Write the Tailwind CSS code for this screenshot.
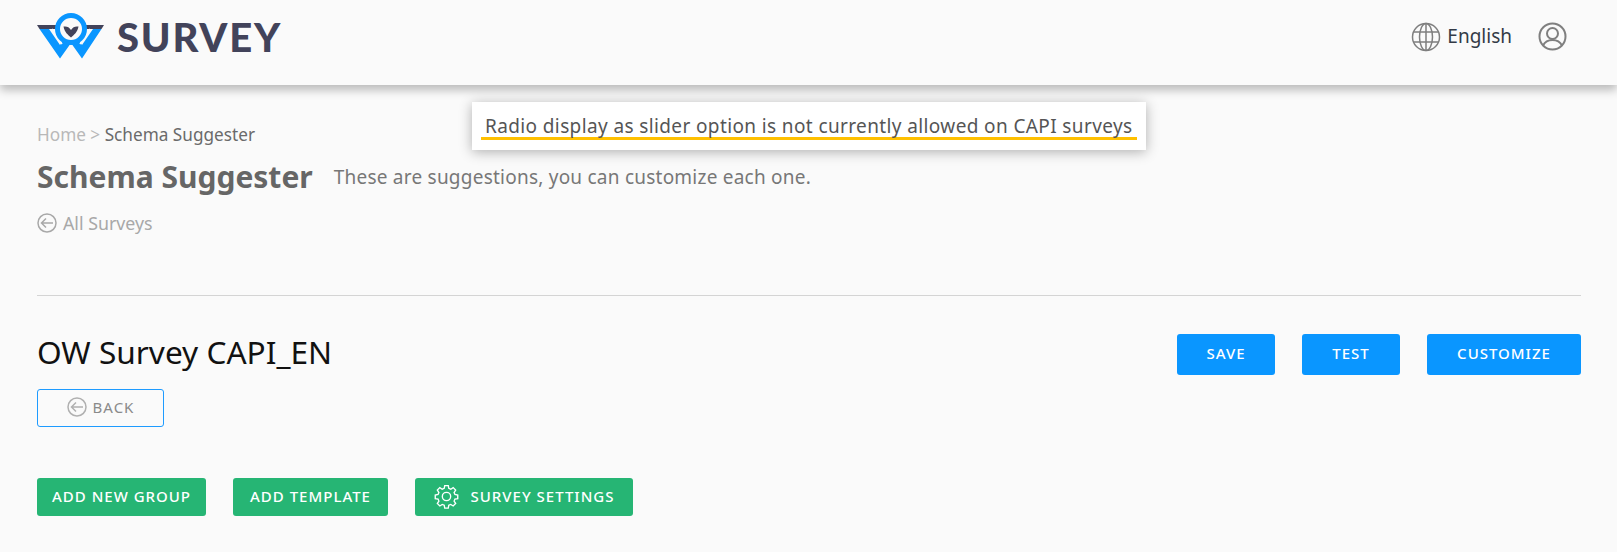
<!DOCTYPE html>
<html lang="en">
<head>
    <meta charset="UTF-8">
    <title>Survey - Schema Suggester</title>
    <script src="https://cdn.jsdelivr.net/npm/@tailwindcss/browser@4"></script>
</head>
<body class="relative h-[552px] overflow-hidden bg-[#fafafa] font-['Noto_Sans',sans-serif]">
<!-- Header -->
<header class="flex h-[85px] items-center justify-between pb-[12px] pl-[37px] pr-[50px] bg-[#fafafa] shadow-[0_5px_9px_rgba(0,0,0,0.26)]">
    <div class="flex items-center gap-[12px]">
        <svg class="w-[68px] h-[48px]" viewBox="0 0 68 48">
            <path d="M0 12H21L22 16H2.500ZM67 12H47L46 16H64.500Z" fill="#42435a"/>
            <path d="M2.500 16L23 45.500L34 30L45 45.500L64.500 16H56L45 32L37 21H31L23 32L12 16Z" fill="#0a96ff"/>
            <path d="M15 16L25 31M53 16L43 31" stroke="#fafafa" stroke-width="1.500"/>
            <circle cx="34" cy="16" r="13.500" fill="#fafafa" stroke="#0a96ff" stroke-width="5"/>
            <path d="M26.500 13.500C30 13 32 14 34 17C36 14 38 13 41.500 13.500C40.500 19 37 22 34 24.500C31 22 27.500 19 26.500 13.500Z" fill="#42435a"/>
        </svg>
        <span class="font-['Lato',sans-serif] font-black text-[40px] leading-none tracking-[1.8px] text-[#42435a]">SURVEY</span>
    </div>
    <div class="flex items-center">
        <svg class="w-[30px] h-[30px] text-[#7f7f7f]" viewBox="0 0 30 30" fill="none" stroke="currentColor" stroke-width="1.500">
            <circle cx="15" cy="15" r="13.500"/>
            <ellipse cx="15" cy="15" rx="6.500" ry="13.500"/>
            <path d="M15 1.500V28.500M2.500 10H27.500M2.500 20H27.500"/>
        </svg>
        <span class="ml-[6px] text-[19px] text-[#333a46]">English</span>
        <svg class="ml-[26px] w-[29px] h-[29px] text-[#7f7f7f]" viewBox="0 0 29 29" fill="none" stroke="currentColor" stroke-width="2">
            <circle cx="14.500" cy="14.500" r="13"/>
            <circle cx="14.500" cy="11.500" r="5.500"/>
            <path d="M5 23.500C7 19.500 10 18 14.500 18C19 18 22 19.500 24 23.500"/>
        </svg>
    </div>
</header>

<!-- Alert over the header -->
<div class="absolute left-[472px] top-[102px] w-[674px] h-[48px] bg-white shadow-[0_2px_12px_rgba(0,0,0,0.3)]">
    <div class="mx-[9px] mt-[7px] h-[31px] border-b-[3px] border-[#ffc000] px-[4px] text-[19px] leading-[34px] tracking-[0.38px] whitespace-nowrap text-[#555555]">Radio display as slider option is not currently allowed on CAPI surveys</div>
</div>

<main class="pl-[37px] pr-[36px]">
    <!-- Breadcrumb + title -->
    <div class="pt-[38px] text-[17.200px] leading-[24px] text-[#b8b8b8]">Home &gt; <span class="text-[#6a6a6a]">Schema Suggester</span></div>
    <div class="mt-[12px] flex items-center h-[36px]">
        <h1 class="text-[30px] leading-[36px] font-bold text-[#666666]">Schema Suggester</h1>
        <span class="ml-[21px] text-[19px] tracking-[0.23px] text-[#777777]">These are suggestions, you can customize each one.</span>
    </div>
    <div class="mt-[16px] flex items-center gap-[6px] text-[17.800px] leading-[24px] text-[#a8a8a8]">
        <svg class="w-[20px] h-[20px]" viewBox="0 0 20 20" fill="none" stroke="currentColor" stroke-width="1.500">
            <circle cx="10" cy="10" r="9"/>
            <path d="M16 10H4.500M9 5.500L4.500 10L9 14.500"/>
        </svg>
        All Surveys
    </div>
    <hr class="mt-[60px] border-t border-[#d4d4d4]">

    <!-- Survey name + actions -->
    <div class="mt-[35px] flex items-start justify-between">
        <div>
            <h2 class="text-[31.600px] leading-[41px] text-[#111111]">OW Survey CAPI_EN</h2>
            <button class="mt-[17px] flex items-center justify-center gap-[6px] w-[127px] h-[38px] rounded-[3px] border border-[#1e9bff] pb-[2px] text-[15px] tracking-[1px] text-[#8a8a8a]">
                <svg class="w-[20px] h-[20px]" viewBox="0 0 20 20" fill="none" stroke="#b0b0b0" stroke-width="1.500">
                    <circle cx="10" cy="10" r="9"/>
                    <path d="M16 10H4.500M9 5.500L4.500 10L9 14.500"/>
                </svg>
                BACK
            </button>
        </div>
        <div class="mt-[3px] flex gap-[27px] text-[15px] font-medium tracking-[1px] text-white">
            <button class="w-[98px] h-[41px] rounded-[3px] bg-[#0a96ff] pb-[2px]">SAVE</button>
            <button class="w-[98px] h-[41px] rounded-[3px] bg-[#0a96ff] pb-[2px]">TEST</button>
            <button class="w-[154px] h-[41px] rounded-[3px] bg-[#0a96ff] pb-[2px]">CUSTOMIZE</button>
        </div>
    </div>

    <!-- Green actions -->
    <div class="mt-[51px] flex gap-[27px] text-[15px] font-medium tracking-[1px] text-white">
        <button class="w-[169px] h-[38px] rounded-[3px] bg-[#26b574] pb-[2px]">ADD NEW GROUP</button>
        <button class="w-[155px] h-[38px] rounded-[3px] bg-[#26b574] pb-[2px]">ADD TEMPLATE</button>
        <button class="w-[218px] h-[38px] rounded-[3px] bg-[#26b574] pb-[2px] flex items-center justify-center gap-[12px]">
            <svg class="w-[25px] h-[25px]" viewBox="0 0 24 24" fill="none" stroke="currentColor" stroke-width="1.300">
                <path d="M10.300 2.300h3.400l.5 2.700 1.900.8 2.300-1.500 2.400 2.400-1.500 2.300.8 1.900 2.700.5v3.400l-2.700.5-.8 1.900 1.500 2.300-2.400 2.400-2.300-1.500-1.900.8-.5 2.700h-3.400l-.5-2.700-1.900-.8-2.300 1.500-2.400-2.400 1.500-2.300-.8-1.900-2.700-.5v-3.400l2.700-.5.8-1.900-1.500-2.300 2.400-2.400 2.300 1.500 1.900-.8z" transform="translate(0 -.8)"/>
                <circle cx="12" cy="12" r="4"/>
            </svg>
            SURVEY SETTINGS
        </button>
    </div>
</main>
</body>
</html>
